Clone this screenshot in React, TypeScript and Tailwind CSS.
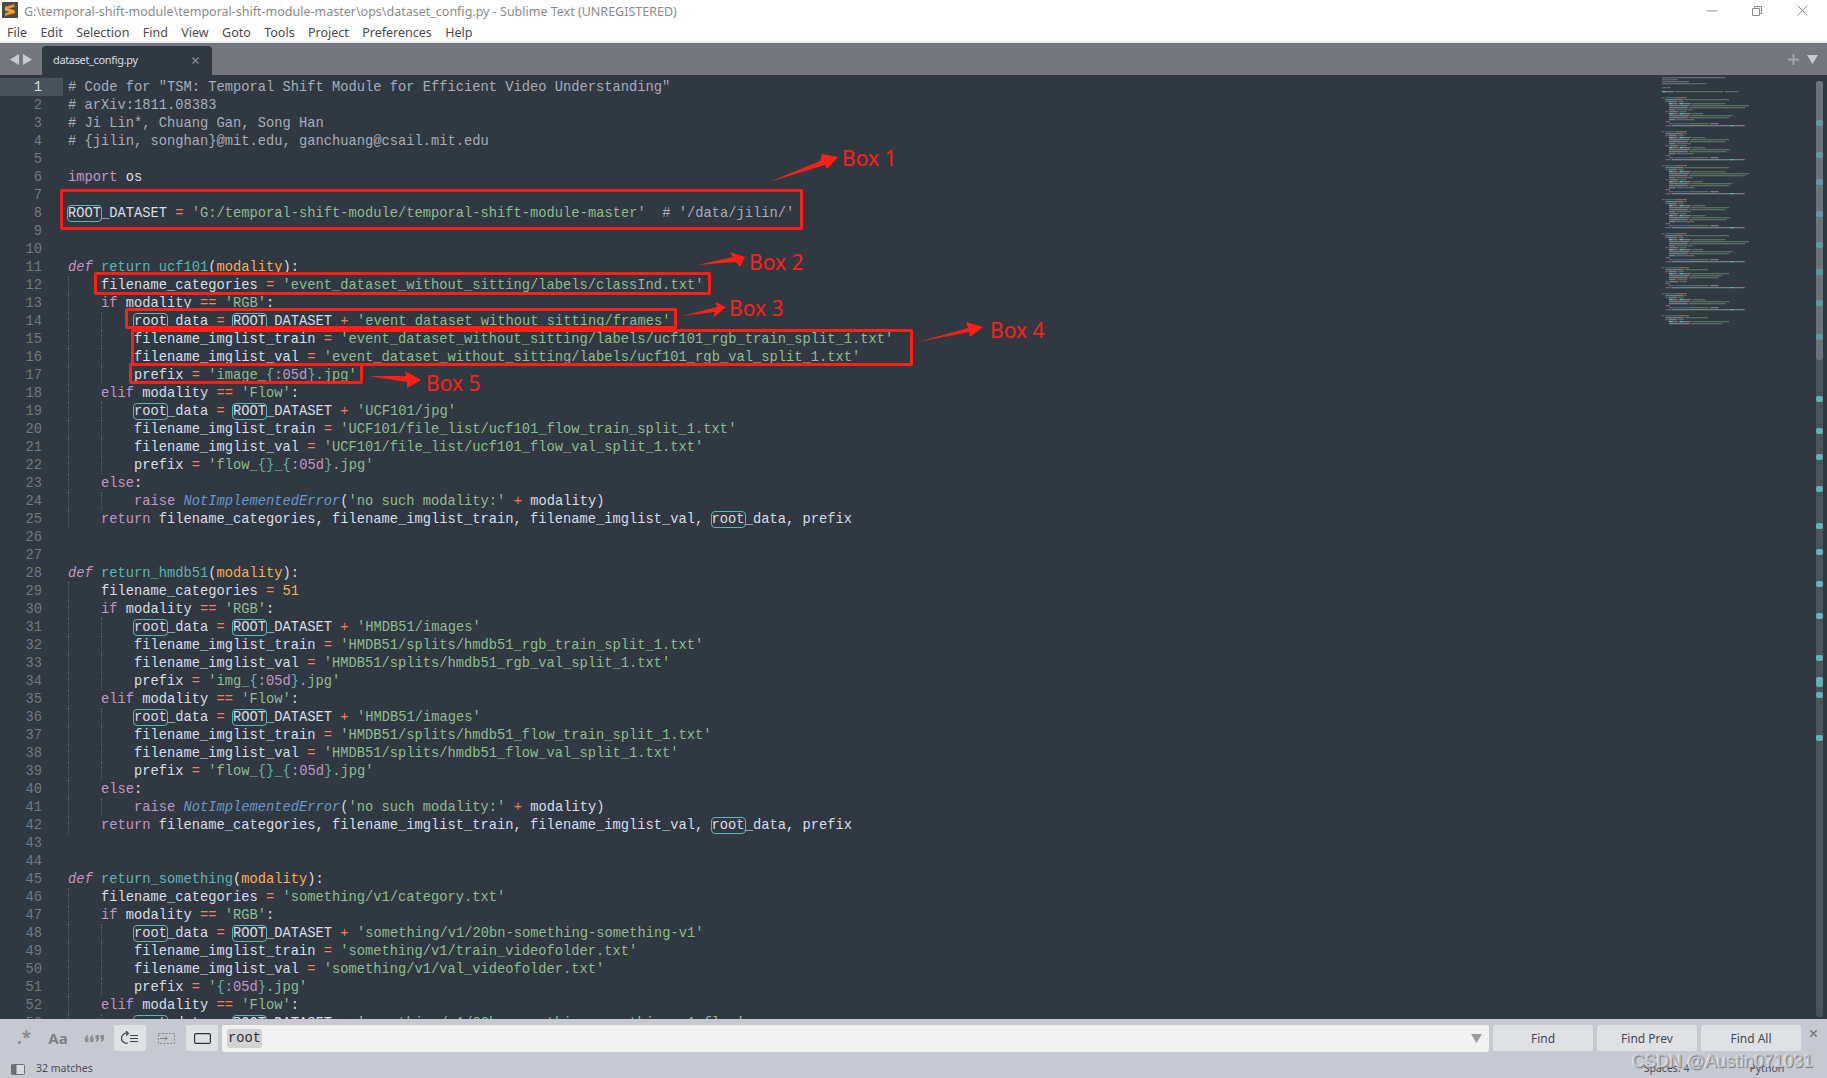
import { Fragment } from 'react'
import { X } from 'lucide-react'

const LINES = [
  `# Code for "TSM: Temporal Shift Module for Efficient Video Understanding"`,
  `# arXiv:1811.08383`,
  `# Ji Lin*, Chuang Gan, Song Han`,
  `# {jilin, songhan}@mit.edu, ganchuang@csail.mit.edu`,
  ``,
  `import os`,
  ``,
  `ROOT_DATASET = 'G:/temporal-shift-module/temporal-shift-module-master'  # '/data/jilin/'`,
  ``,
  ``,
  `def return_ucf101(modality):`,
  `    filename_categories = 'event_dataset_without_sitting/labels/classInd.txt'`,
  `    if modality == 'RGB':`,
  `        root_data = ROOT_DATASET + 'event_dataset_without_sitting/frames'`,
  `        filename_imglist_train = 'event_dataset_without_sitting/labels/ucf101_rgb_train_split_1.txt'`,
  `        filename_imglist_val = 'event_dataset_without_sitting/labels/ucf101_rgb_val_split_1.txt'`,
  `        prefix = 'image_{:05d}.jpg'`,
  `    elif modality == 'Flow':`,
  `        root_data = ROOT_DATASET + 'UCF101/jpg'`,
  `        filename_imglist_train = 'UCF101/file_list/ucf101_flow_train_split_1.txt'`,
  `        filename_imglist_val = 'UCF101/file_list/ucf101_flow_val_split_1.txt'`,
  `        prefix = 'flow_{}_{:05d}.jpg'`,
  `    else:`,
  `        raise NotImplementedError('no such modality:' + modality)`,
  `    return filename_categories, filename_imglist_train, filename_imglist_val, root_data, prefix`,
  ``,
  ``,
  `def return_hmdb51(modality):`,
  `    filename_categories = 51`,
  `    if modality == 'RGB':`,
  `        root_data = ROOT_DATASET + 'HMDB51/images'`,
  `        filename_imglist_train = 'HMDB51/splits/hmdb51_rgb_train_split_1.txt'`,
  `        filename_imglist_val = 'HMDB51/splits/hmdb51_rgb_val_split_1.txt'`,
  `        prefix = 'img_{:05d}.jpg'`,
  `    elif modality == 'Flow':`,
  `        root_data = ROOT_DATASET + 'HMDB51/images'`,
  `        filename_imglist_train = 'HMDB51/splits/hmdb51_flow_train_split_1.txt'`,
  `        filename_imglist_val = 'HMDB51/splits/hmdb51_flow_val_split_1.txt'`,
  `        prefix = 'flow_{}_{:05d}.jpg'`,
  `    else:`,
  `        raise NotImplementedError('no such modality:' + modality)`,
  `    return filename_categories, filename_imglist_train, filename_imglist_val, root_data, prefix`,
  ``,
  ``,
  `def return_something(modality):`,
  `    filename_categories = 'something/v1/category.txt'`,
  `    if modality == 'RGB':`,
  `        root_data = ROOT_DATASET + 'something/v1/20bn-something-something-v1'`,
  `        filename_imglist_train = 'something/v1/train_videofolder.txt'`,
  `        filename_imglist_val = 'something/v1/val_videofolder.txt'`,
  `        prefix = '{:05d}.jpg'`,
  `    elif modality == 'Flow':`,
  `        root_data = ROOT_DATASET + 'something/v1/20bn-something-something-v1-flow'`,
]

const MENU = ['File', 'Edit', 'Selection', 'Find', 'View', 'Goto', 'Tools', 'Project', 'Preferences', 'Help']
const MARKERS = [120, 152, 179, 211, 242, 269, 300, 334, 396, 428, 454, 486, 523, 549, 581, 613, 655, 677, 681, 692, 735]

const COLORS = {
  plain: '#d8dee9',
  comment: '#a7adba',
  keyword: '#c695c6',
  string: '#8fbd8f',
  operator: '#f97b58',
  func: '#5fb4b4',
  param: '#f9ae58',
  cls: '#6699cc',
}

type Token = { text: string; color: string; italic?: boolean; match?: boolean }

const TOKEN_RE = /(#.*$)|('[^']*')|\b(if|elif|else|return|raise|import)\b|(NotImplementedError)|(==|=|\+)|\b(\d+)\b/g

const stringTokens = (text: string): Token[] =>
  text
    .split(/(\{|\}|:05d)/)
    .filter(Boolean)
    .map((part) => {
      if (part === '{' || part === '}') return { text: part, color: COLORS.func }
      if (part === ':05d') return { text: part, color: COLORS.keyword }
      return { text: part, color: COLORS.string }
    })

const plainTokens = (text: string): Token[] =>
  text
    .split(/(root)/i)
    .filter(Boolean)
    .map((part) => ({ text: part, color: COLORS.plain, match: part.toLowerCase() === 'root' }))

const tokenize = (line: string): Token[] => {
  const def = line.match(/^def (\w+)\((\w+)\):$/)
  if (def) {
    return [
      { text: 'def', color: COLORS.keyword, italic: true },
      { text: ' ', color: COLORS.plain },
      { text: def[1], color: COLORS.func },
      { text: '(', color: COLORS.plain },
      { text: def[2], color: COLORS.param },
      { text: '):', color: COLORS.plain },
    ]
  }

  const out: Token[] = []
  let last = 0
  for (const m of line.matchAll(TOKEN_RE)) {
    if (m.index > last) out.push(...plainTokens(line.slice(last, m.index)))
    if (m[1]) out.push({ text: m[1], color: COLORS.comment })
    else if (m[2]) out.push(...stringTokens(m[2]))
    else if (m[3]) out.push({ text: m[3], color: COLORS.keyword })
    else if (m[4]) out.push({ text: m[4], color: COLORS.cls, italic: true })
    else if (m[5]) out.push({ text: m[5], color: COLORS.operator })
    else if (m[6]) out.push({ text: m[6], color: COLORS.param })
    last = m.index + m[0].length
  }
  if (last < line.length) out.push(...plainTokens(line.slice(last)))
  return out
}

const CodeLine = ({ line, num }: { line: string; num: number }) => {
  const indent = line.match(/^ */)?.[0].length ?? 0
  const levels = Math.floor(indent / 4)

  return (
    <div className="flex h-[18px] leading-[20px]">
      <div
        className={`w-[63px] shrink-0 pr-[21px] text-right ${
          num === 1 ? 'bg-[#49535c] text-[#d8dee9]' : 'text-[#6f7a84]'
        }`}
      >
        {num}
      </div>
      <div className="flex whitespace-pre pl-[5px]">
        {Array.from({ length: levels }, (_, i) => (
          <span key={i} className="h-[18px] w-[33px] shrink-0 border-l border-dotted border-[#5a636c]" />
        ))}
        <span>
          {tokenize(line.slice(levels * 4)).map((t, i) => (
            <span
              key={i}
              style={{ color: t.color }}
              className={`${t.italic ? 'italic' : ''} ${
                t.match ? 'rounded-[3px] outline outline-1 outline-[#5fb4b4]' : ''
              }`}
            >
              {t.text}
            </span>
          ))}
        </span>
      </div>
    </div>
  )
}

const MINIMAP_LINES = [
  ...LINES.slice(0, 44),
  ...LINES.slice(10, 27),
  ...LINES.slice(27, 44),
  ...LINES.slice(10, 27),
  ...LINES.slice(44, 52),
  ...LINES.slice(22, 27),
  ...LINES.slice(27, 33),
  ...LINES.slice(39, 44),
  ...LINES.slice(44, 49),
]

const Minimap = () => (
  <svg width="154" height="250" className="mt-[2px] shrink-0">
    {MINIMAP_LINES.map((line, y) => {
      let x = 0
      return (
        <Fragment key={y}>
          {tokenize(line).map((t, i) => {
            const w = t.text.length * 0.87
            const lead = t.text.length - t.text.trimStart().length
            const rect = (
              <rect
                key={i}
                x={x + lead * 0.87}
                y={y * 2}
                width={Math.max(w - lead * 0.87, 0)}
                height={1.3}
                fill={t.match ? '#5fc4c4' : t.color}
                opacity={t.match ? 0.95 : 0.42}
              />
            )
            x += w
            return rect
          })}
        </Fragment>
      )
    })}
  </svg>
)

const Scrollbar = () => (
  <div className="relative mb-[2px] mr-[4px] mt-[6px] w-[7px] shrink-0 rounded-[3px] bg-[#4b545d]">
    <div className="h-[279px] rounded-[3px] bg-[#6c7279]" />
    {MARKERS.map((y) => (
      <div
        key={y}
        className={`absolute left-0 h-[6px] w-[7px] rounded-[2px] ${y < 360 ? 'bg-[#5f9a9e]' : 'bg-[#5fb4b4]'}`}
        style={{ top: y - 81 }}
      />
    ))}
  </div>
)

const Logo = () => (
  <svg width="16" height="16" viewBox="0 0 16 16" className="mt-[2px] shrink-0">
    <rect width="16" height="16" fill="#4a4a4a" />
    <path d="M3 4.800 12.500 2v3L3 7.800zM12.500 8.200v3L3 14v-3z" fill="#f0911e" />
    <path d="M3 5.600 12.500 8.200v3L3 8.600z" fill="#f5a623" />
  </svg>
)

const Annotation = ({ className }: { className: string }) => (
  <div className={`absolute rounded-[2px] border-[3px] border-[#fe1f17] ${className}`} />
)

const BoxLabel = ({ text, className }: { text: string; className: string }) => (
  <span
    className={`absolute text-[21px] leading-[26px] text-[#fe1f17] [font-family:'Noto_Sans',sans-serif] ${className}`}
  >
    {text}
  </span>
)

const ARROWS = [
  '769,182 820,161 822,154 838,157 827,169 825,165',
  '697,265 733,257 730,252 745,257 740,267 736,262',
  '682,316 717,307 715,302 726,307 713,318 715,312',
  '918,342 968,328 966,322 983,327 970,337 969,332',
  '368,376 406,376 405,371 421,380 407,388 407,382',
]

const FindToggle = ({ children, active }: { children: React.ReactNode; active?: boolean }) => (
  <div
    className={`flex h-[26px] w-[32px] shrink-0 items-center justify-center rounded-[2px] ${
      active ? 'bg-[#e0e1e5]' : ''
    }`}
  >
    {children}
  </div>
)

const FindButton = ({ label }: { label: string }) => (
  <div className="flex h-[26px] w-[100px] shrink-0 items-center justify-center rounded-[2px] bg-[#e0e1e5] pt-[1px] text-[12px] text-[#444b55]">
    {label}
  </div>
)

export default function App() {
  return (
    <div className="relative flex h-[1078px] w-[1827px] flex-col overflow-hidden bg-white [font-family:'Noto_Sans',sans-serif]">
      {/* title bar */}
      <div className="flex h-[24px] shrink-0 items-start justify-between">
        <div className="flex items-start gap-[6px] pl-[2px]">
          <Logo />
          <span className="text-[12.500px] leading-[24px] text-[#8a8a8a]">
            G:\temporal-shift-module\temporal-shift-module-master\ops\dataset_config.py - Sublime Text (UNREGISTERED)
          </span>
        </div>
        <div className="mt-[5px] flex items-center gap-[35px] pr-[19px] text-[#8a8a8a]">
          <svg width="10" height="10" viewBox="0 0 10 10">
            <path d="M0 5h10" stroke="currentColor" fill="none" />
          </svg>
          <svg width="10" height="10" viewBox="0 0 10 10">
            <path d="M.5 2.500h7v7h-7zM2.500 2.500v-2h7v7h-2" stroke="currentColor" fill="none" />
          </svg>
          <svg width="11" height="11" viewBox="0 0 11 11">
            <path d="M.5.5l10 10M10.500.5l-10 10" stroke="currentColor" fill="none" />
          </svg>
        </div>
      </div>

      {/* menu */}
      <div className="flex h-[17px] shrink-0 items-center gap-[13.400px] pl-[7px] pt-[2px] text-[12.500px] text-[#4a4a4a]">
        {MENU.map((item) => (
          <span key={item}>{item}</span>
        ))}
      </div>
      <div className="h-[2px] shrink-0 bg-[#eeeeee]" />

      {/* tab bar */}
      <div className="flex h-[32px] shrink-0 items-end justify-between bg-[#74787e]">
        <div className="flex h-full items-end">
          <div className="flex h-full w-[42px] items-center justify-center gap-[4px] text-[#c6c9cd]">
            <svg width="9" height="11" viewBox="0 0 9 11">
              <path d="M9 0v11L0 5.500z" fill="currentColor" />
            </svg>
            <svg width="9" height="11" viewBox="0 0 9 11">
              <path d="M0 0v11l9-5.500z" fill="currentColor" />
            </svg>
          </div>
          <div className="flex h-[29px] w-[170px] items-center justify-between rounded-t-[4px] bg-[#303841] px-[11px] text-[11px] tracking-[-0.35px] text-[#d8dee9]">
            <span>dataset_config.py</span>
            <X size={11} strokeWidth={2.5} className="text-[#8a9098]" />
          </div>
        </div>
        <div className="flex h-full items-center gap-[8px] pr-[9px]">
          <svg width="11" height="11" viewBox="0 0 11 11">
            <path d="M5.500 0v11M0 5.500h11" stroke="#a0a4a9" strokeWidth="2" />
          </svg>
          <svg width="11" height="9" viewBox="0 0 11 9">
            <path d="M0 0h11L5.500 9z" fill="#c6c9cd" />
          </svg>
        </div>
      </div>

      {/* editor */}
      <div className="flex min-h-0 flex-1 bg-[#303841]">
        <div className="min-w-0 flex-1 overflow-hidden pt-[3px] text-[13.750px] [font-family:'Liberation_Mono',monospace]">
          {LINES.map((line, i) => (
            <CodeLine key={i} line={line} num={i + 1} />
          ))}
        </div>
        <Minimap />
        <Scrollbar />
      </div>

      {/* find panel */}
      <div className="flex h-[37px] shrink-0 items-start bg-[#c6c9d1] pt-[6px]">
        <div className="flex w-[114px] shrink-0 items-center">
          <span className="w-[40px] pl-[8px] text-center text-[17px] font-bold leading-[26px] text-[#8a8d93]">.*</span>
          <span className="w-[36px] text-center text-[15px] font-bold leading-[26px] text-[#7d8086]">Aa</span>
          <span className="flex w-[36px] justify-center">
            <svg width="19" height="7" viewBox="0 0 19 7" fill="#8a8d93">
              <path d="M0 7V3.500C0 1.500 1.200.4 3 0v1.600c-.7.2-1 .6-1 1.200h1.500V7zM5 7V3.500C5 1.500 6.200.4 8 0v1.600c-.7.2-1 .6-1 1.200h1.500V7z" />
              <path d="M10.500 0H14v3.500c0 2-1.200 3.100-3 3.500V5.400c.7-.2 1-.6 1-1.200h-1.500zM15.500 0H19v3.500c0 2-1.200 3.100-3 3.500V5.400c.7-.2 1-.6 1-1.200h-1.500z" />
            </svg>
          </span>
        </div>
        <FindToggle active>
          <svg width="18" height="14" viewBox="0 0 18 14" fill="none" stroke="#3f444c" strokeWidth="1.200">
            <path d="M7 2.500A5 5 0 1 0 7 12" />
            <path d="M5 0l2.500 2.500L5 4.500" />
            <path d="M9 4.500h8M9 7.500h8M9 10.500h8" />
          </svg>
        </FindToggle>
        <div className="ml-[4px]">
          <FindToggle>
            <svg width="17" height="11" viewBox="0 0 17 11" fill="none" stroke="#80838a">
              <path d="M.5.5h16v10H.5z" strokeDasharray="2 1.500" />
              <path d="M2 5.500h7M7 3.500l2 2-2 2" />
            </svg>
          </FindToggle>
        </div>
        <div className="ml-[4px]">
          <FindToggle active>
            <svg width="17" height="11" viewBox="0 0 17 11" fill="none" stroke="#30343a" strokeWidth="1.200">
              <rect x=".6" y=".6" width="15.800" height="9.800" rx="1.500" />
            </svg>
          </FindToggle>
        </div>
        <div className="ml-[4px] flex h-[27px] w-[1267px] shrink-0 items-center justify-between rounded-[2px] bg-[#f1f1f1] pl-[5px] pr-[7px]">
          <span className="rounded-[3px] bg-[#d2d2d2] px-[1px] text-[13.750px] leading-[19px] text-[#2b2f36] [font-family:'Liberation_Mono',monospace]">
            root
          </span>
          <svg width="11" height="9" viewBox="0 0 11 9">
            <path d="M0 0h11L5.500 9z" fill="#9a9a9a" />
          </svg>
        </div>
        <div className="ml-[4px] flex gap-[4px]">
          <FindButton label="Find" />
          <FindButton label="Find Prev" />
          <FindButton label="Find All" />
        </div>
        <X size={11} strokeWidth={3} className="ml-[7px] mt-[3px] shrink-0 text-[#6f737a]" />
      </div>

      {/* status bar */}
      <div className="flex h-[22px] shrink-0 items-center bg-[#c6c9d1] pt-[4px] text-[10.500px] text-[#4a4f57]">
        <svg width="14" height="11" viewBox="0 0 14 11" className="ml-[11px]">
          <rect x=".5" y=".5" width="13" height="10" rx="1" fill="#d8dae0" stroke="#6c7076" />
          <rect x=".5" y=".5" width="5" height="10" fill="#6c7076" />
        </svg>
        <span className="ml-[11px]">32 matches</span>
        <span className="ml-[1551px]">Spaces: 4</span>
        <span className="ml-[60px]">Python</span>
      </div>

      {/* red annotations drawn on top of the screenshot */}
      <Annotation className="left-[60px] top-[189px] h-[41px] w-[743px]" />
      <Annotation className="left-[94px] top-[272px] h-[23px] w-[617px]" />
      <Annotation className="left-[125px] top-[308px] h-[21px] w-[552px]" />
      <Annotation className="left-[131px] top-[329px] h-[37px] w-[782px]" />
      <Annotation className="left-[129px] top-[363px] h-[21px] w-[234px]" />
      <svg width="1827" height="1078" className="pointer-events-none absolute left-0 top-0">
        {ARROWS.map((points) => (
          <polygon key={points} points={points} fill="#fe1f17" />
        ))}
      </svg>
      <BoxLabel text="Box 1" className="left-[842px] top-[145px]" />
      <BoxLabel text="Box 2" className="left-[749px] top-[249px]" />
      <BoxLabel text="Box 3" className="left-[729px] top-[295px]" />
      <BoxLabel text="Box 4" className="left-[990px] top-[317px]" />
      <BoxLabel text="Box 5" className="left-[426px] top-[370px]" />

      <span className="absolute left-[1632px] top-[1050px] text-[17.700px] leading-[22px] text-[#c2c5cc] [font-family:'Liberation_Sans',sans-serif] [text-shadow:1px_1px_1px_#70747a,-1px_0_0_#eceef1]">
        CSDN @Austin071031
      </span>
    </div>
  )
}
